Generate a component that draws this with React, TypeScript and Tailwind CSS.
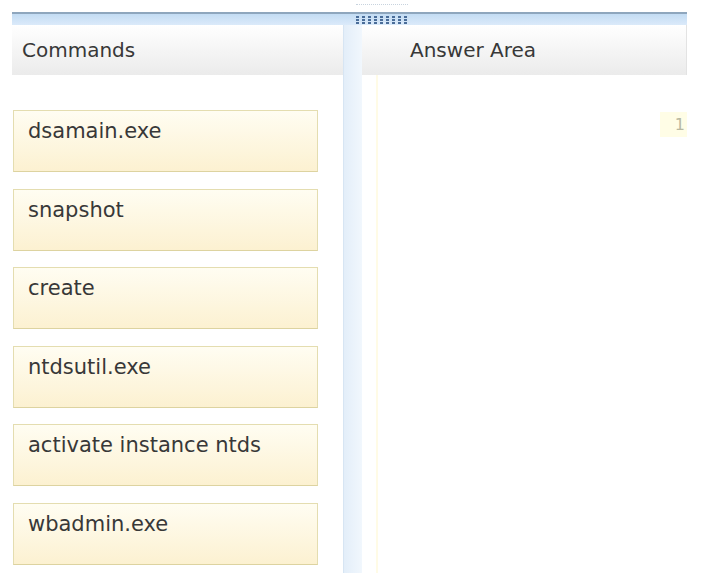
import React from 'react'

const commands = ['dsamain.exe', 'snapshot', 'create', 'ntdsutil.exe', 'activate instance ntds', 'wbadmin.exe']

function Grip() {
  const dots = []
  for (let r = 0; r < 3; r++) {
    for (let c = 0; c < 9; c++) {
      dots.push(<rect key={`${r}-${c}`} x={c * 6 + 1} y={r * 3 + 1} width="3" height="2" fill="#4a6d99" />)
    }
  }
  return (
    <svg width="54" height="10" viewBox="0 0 54 10">
      {dots}
    </svg>
  )
}

export default function App() {
  return (
    <div className="w-[704px] h-[588px] bg-white overflow-hidden font-['DejaVu_Sans',sans-serif] text-[#383838]">
      <div className="h-[12px] pl-[356px] pt-[4px]">
        <div className="h-[3px] w-[52px] border-t border-dotted border-[#c8d3de]" />
      </div>

      {/* barra superior */}
      <div className="ml-[12px] w-[675px] h-[13px] border-t-2 border-[#8ea6bd] bg-gradient-to-b from-[#c3dcf3] to-[#dbeafa] pl-[343px] pt-[1px]">
        <Grip />
      </div>

      <div className="flex ml-[12px]">
        {/* coluna esquerda */}
        <div className="w-[331px] flex flex-col">
          <div className="h-[50px] pl-[10px] flex items-center text-[20px] bg-gradient-to-b from-white to-[#ebebeb]">
            Commands
          </div>
          <div className="flex flex-col gap-[16.5px] mt-[35px] ml-[1px]">
            {commands.map(c => (
              <div key={c} className="w-[305px] h-[62px] border border-[#e4ddb0] border-b-[#ddd3a0] bg-gradient-to-b from-[#fffdf2] to-[#fcf1d1] pl-[14px] pt-2 text-[21px] leading-[24px]">
                {c}
              </div>
            ))}
          </div>
        </div>

        {/* divisor */}
        <div className="w-[19px] h-[548px] bg-gradient-to-r from-[#e3eef9] to-[#f1f7fd] border-l border-[#d7e5f3]" />

        {/* área de resposta */}
        <div className="w-[325px] flex flex-col">
          <div className="h-[50px] pl-[48px] flex items-center text-[20px] bg-gradient-to-b from-white to-[#ebebeb] border-r border-[#e3e3e3]">
            Answer Area
          </div>
          <div className="flex-1 flex">
            <div className="ml-[14px] w-[2px] bg-[#fffbe6]" />
            <div className="flex-1 flex justify-end pt-[37px]">
              <div className="w-[27px] h-[25px] bg-[#fffde6] text-[16px] text-[#b8b8a0] text-right pr-[2px] leading-[25px]">
                1
              </div>
            </div>
          </div>
        </div>
      </div>
    </div>
  )
}
